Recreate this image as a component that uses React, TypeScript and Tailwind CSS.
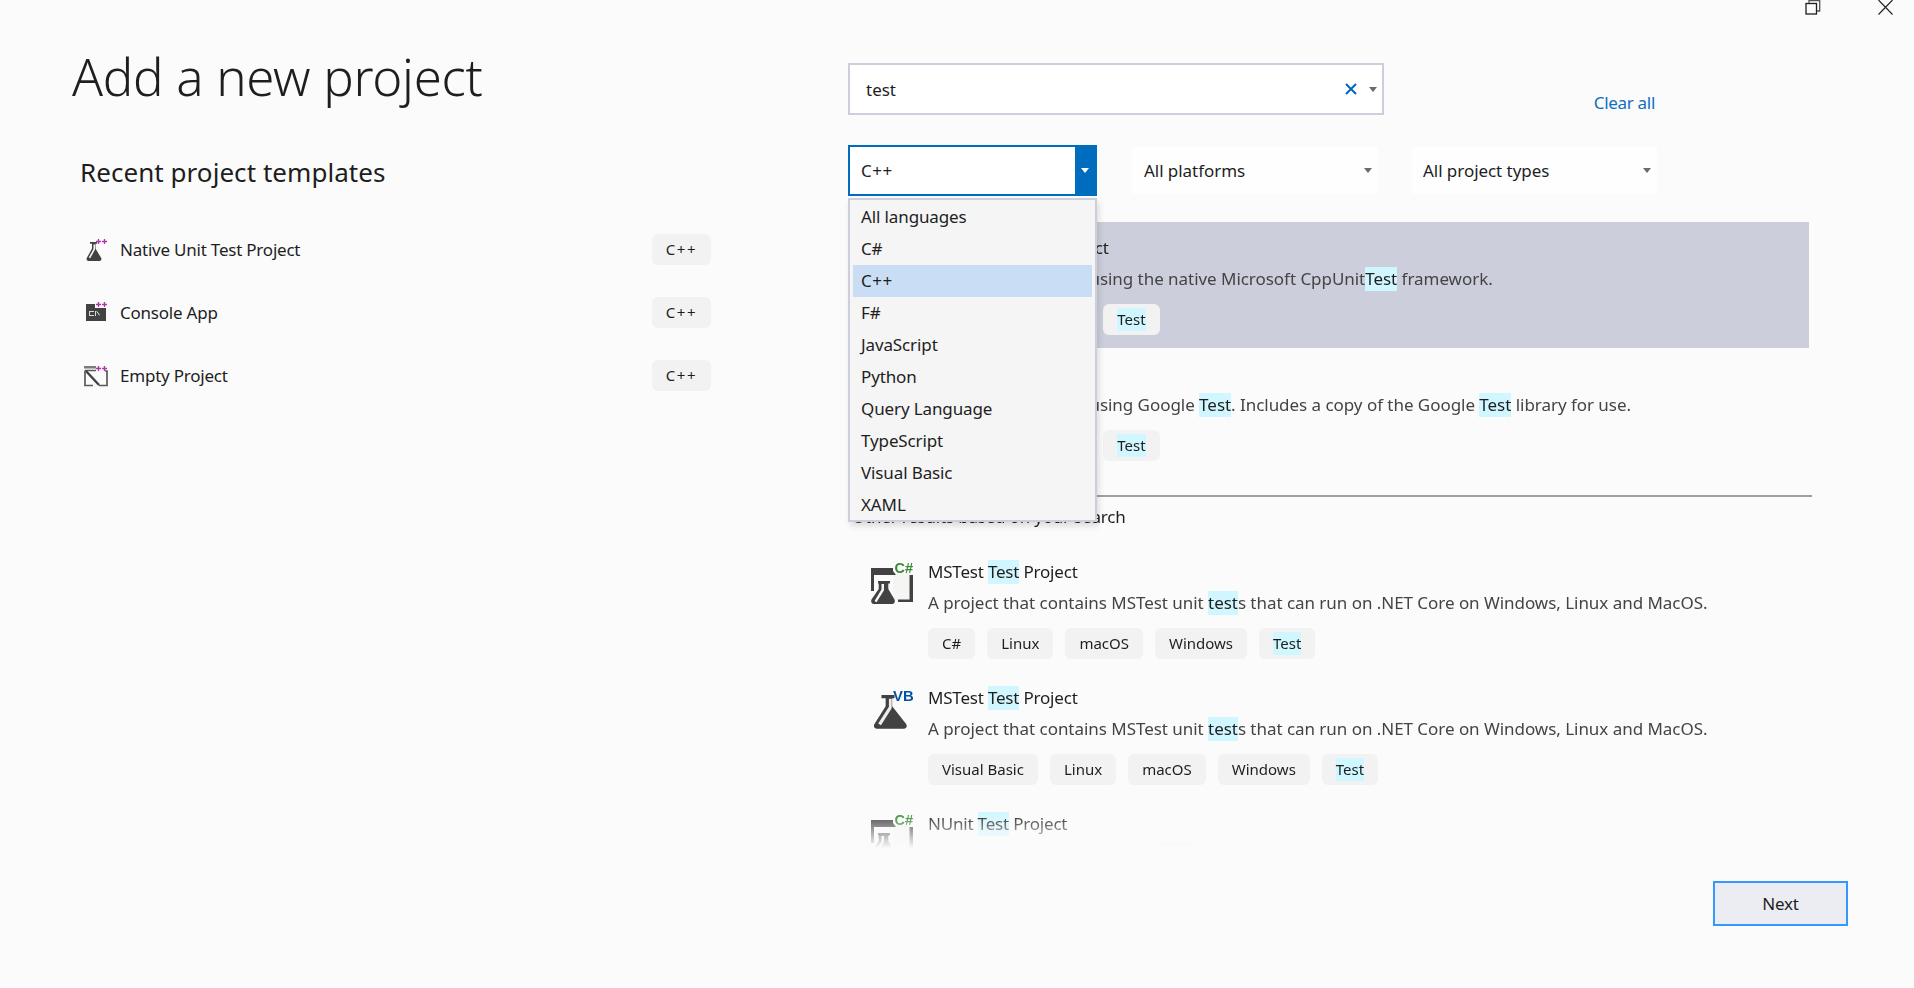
import { ReactNode } from "react";

const font = "font-['Noto_Sans',sans-serif]";

function Hl({ children }: { children: ReactNode }) {
  return <span className="inline-block bg-[#d0f6ff] text-[#1e1e1e]">{children}</span>;
}

function Caret({ className = "border-t-[#6b6b6b]" }: { className?: string }) {
  return (
    <span className={`block h-0 w-0 border-x-[4px] border-t-[5px] border-x-transparent ${className}`} />
  );
}

function Chip({ children }: { children: ReactNode }) {
  return (
    <span className="flex h-[31px] items-center rounded-[6px] bg-[#f2f2f2] px-[14px] text-[15px] text-[#1e1e1e]">
      {children}
    </span>
  );
}

function PlusPlus() {
  return (
    <path d="M14.500 1v5M12 3.500h5M20.500 1v5M18 3.500h5" stroke="#a838a8" strokeWidth="1.300" fill="none" />
  );
}

function FlaskCpp() {
  return (
    <svg width="24" height="24" viewBox="0 0 24 24">
      <path d="M6 4h7v1.800h-1.500v4.700l5.700 9.500c.6 1.300 0 3-1.500 3H4.300c-1.500 0-2.100-1.700-1.500-3l5.200-9.500V5.800H6z" fill="#424242" />
      <path d="M9.500 6.500v4.500L4.800 19.500l1.400.8 4.800-8.800V6.500z" fill="#fbfbfb" />
      <PlusPlus />
    </svg>
  );
}

function ConsoleCpp() {
  return (
    <svg width="24" height="24" viewBox="0 0 24 24">
      <path d="M2 3h10l2 2.500h8V20H2z" fill="#424242" />
      <path d="M5 10h5v1H6v3h4v1H5zM11 10h1v5h-1zM13 10l3 4-.8.6-3-4z" fill="#d8d8d8" />
      <rect x="11" y="0" width="13" height="7" fill="#fbfbfb" />
      <PlusPlus />
    </svg>
  );
}

function EmptyCpp() {
  return (
    <svg width="26" height="26" viewBox="0 0 26 26">
      <path d="M0 3h12v2.500H0z" fill="#7c7c7c" />
      <path d="M1 7.500h11M1 7.500v15h8M15 22.500h8V8h-2" stroke="#5a5a5a" strokeWidth="1.700" fill="none" />
      <path d="M2 8l13 14" stroke="#424242" strokeWidth="2.400" />
      <g transform="translate(0 2)">
        <PlusPlus />
      </g>
    </svg>
  );
}

function FlaskProject({ lang }: { lang: "C#" }) {
  return (
    <svg width="44" height="44" viewBox="0 0 44 44">
      <path d="M22 11h16v27H22z" fill="#f5f5f3" />
      <path d="M0 6h22v3l3 4H0z" fill="#424242" />
      <path d="M0 13h3v16H0zM38.500 13H42v27H27v-2.500h11.500z" fill="#424242" />
      <path d="M7 19h12v2.500h-1.700v5.500l6.200 10.500c.9 1.800 0 4.500-2 4.500H2.500c-2 0-2.900-2.700-2-4.500L7.700 27v-5.500H7z" fill="#424242" />
      <path d="M10.500 22v5.500L3.500 39l2 1.200 7.500-12V22z" fill="#f5f5f3" />
      <text x="23.500" y="11" fontFamily="'Liberation Sans',sans-serif" fontWeight="700" fontSize="14.500" fill="#388a34">{lang}</text>
    </svg>
  );
}

function FlaskVb() {
  return (
    <svg width="44" height="44" viewBox="0 0 44 44" className="ml-[3px]">
      <path d="M8 6h14v3.500h-2.500v8.500L34.500 37c1.500 2.500.2 5-2.500 5H3c-2.700 0-4-2.500-2.500-5L12.500 18V9.500H8z" fill="#424242" />
      <path d="M16 10v8.500L4.500 36.500l3 1.800L19 20V10z" fill="#ececec" />
      <text x="20.500" y="12" fontFamily="'Liberation Sans',sans-serif" fontWeight="700" fontSize="16" fill="#00539c">VB</text>
    </svg>
  );
}

type Row = {
  icon?: ReactNode;
  title: ReactNode;
  desc: ReactNode;
  tags: ReactNode[];
  selected?: boolean;
};

const testTag = <Hl>Test</Hl>;
const cppTag = <span className="tracking-[1.5px]">C++</span>;
const cppInline = <span className="tracking-[0.6px]">C++</span>;

const rows: Row[] = [
  {
    selected: true,
    icon: null,
    title: "Native Unit Test Project",
    desc: (
      <>
        Write {cppInline} unit tests using the native Microsoft CppUnit<Hl>Test</Hl> framework.
      </>
    ),
    tags: [cppTag, "Windows", testTag],
  },
  {
    icon: null,
    title: "Google Test",
    desc: (
      <>
        Write {cppInline} unit tests using Google <Hl>Test</Hl>. Includes a copy of the Google <Hl>Test</Hl> library for use.
      </>
    ),
    tags: [cppTag, "Windows", testTag],
  },
];

const otherDesc = (
  <>
    A project that contains MSTest unit <Hl>test</Hl>s that can run on .NET Core on Windows, Linux and MacOS.
  </>
);

const otherRows: Row[] = [
  {
    icon: <FlaskProject lang="C#" />,
    title: (
      <>
        MSTest <Hl>Test</Hl> Project
      </>
    ),
    desc: otherDesc,
    tags: ["C#", "Linux", "macOS", "Windows", testTag],
  },
  {
    icon: <FlaskVb />,
    title: (
      <>
        MSTest <Hl>Test</Hl> Project
      </>
    ),
    desc: otherDesc,
    tags: ["Visual Basic", "Linux", "macOS", "Windows", testTag],
  },
  {
    icon: <FlaskProject lang="C#" />,
    title: (
      <>
        NUnit <Hl>Test</Hl> Project
      </>
    ),
    desc: (
      <>
        A project that contains NUnit <Hl>test</Hl>s that can run on .NET Core on Windows, Linux and MacOS.
      </>
    ),
    tags: ["C#", "Linux", "macOS", "Windows", testTag],
  },
];

function TemplateRow({ row }: { row: Row }) {
  return (
    <div className={`flex h-[126px] shrink-0 pt-[14px] pl-[19px] ${row.selected ? "bg-[#cccedb]" : ""}`}>
      <div className="mr-[13px] flex w-[44px] shrink-0 items-start justify-start pt-[2px]">{row.icon}</div>
      <div className="flex flex-col">
        <div className="h-[24px] text-[17px] leading-[24px] tracking-[-0.2px] text-[#1e1e1e]">{row.title}</div>
        <div className="mt-[7px] h-[24px] text-[17px] leading-[24px] tracking-[-0.04px] whitespace-nowrap text-[#444444]">
          {row.desc}
        </div>
        <div className="mt-[13px] flex gap-[12px]">
          {row.tags.map((t, i) => (
            <Chip key={i}>{t}</Chip>
          ))}
        </div>
      </div>
    </div>
  );
}

const recent = [
  { name: "Native Unit Test Project", icon: <FlaskCpp /> },
  { name: "Console App", icon: <ConsoleCpp /> },
  { name: "Empty Project", icon: <EmptyCpp /> },
];

const languages = [
  "All languages",
  "C#",
  "C++",
  "F#",
  "JavaScript",
  "Python",
  "Query Language",
  "TypeScript",
  "Visual Basic",
  "XAML",
];

export default function App() {
  return (
    <div className={`flex h-[988px] w-[1914px] flex-col overflow-hidden bg-[#fbfbfb] ${font}`}>
      {/* window buttons, cut off at the top of the screenshot */}
      <div className="flex h-[14px] shrink-0 justify-end">
        <svg width="16" height="15" viewBox="0 0 16 15" className="mr-[57px]" fill="none" stroke="#1e1e1e" strokeWidth="1.300">
          <rect x="1" y="3.500" width="10.500" height="10.500" />
          <path d="M4 3V.7h10.700v10.300H12" stroke="#555" />
        </svg>
        <svg width="15" height="15" viewBox="0 0 15 15" className="mr-[21px]" stroke="#1e1e1e" strokeWidth="1.100">
          <path d="M.5 0L14.500 14.500M14.500 0L.5 14.500" />
        </svg>
      </div>

      <div className="flex flex-1">
        {/* left column */}
        <div className="w-[848px] shrink-0">
          <h1 className="mt-[28px] ml-[72px] text-[51px] leading-[68px] font-light tracking-[-0.3px] text-[#1e1e1e]">
            Add a new project
          </h1>
          <h2 className="mt-[44px] ml-[80px] text-[26px] leading-[36px] font-normal tracking-[0.05px] text-[#1e1e1e]">
            Recent project templates
          </h2>
          <div className="mt-[44px] mr-[137px] ml-[84px] flex flex-col gap-[32px]">
            {recent.map((r) => (
              <div key={r.name} className="flex h-[31px] items-center">
                <div className="flex w-[36px] shrink-0 items-center">{r.icon}</div>
                <span className="flex-1 text-[17px] tracking-[-0.22px] text-[#1e1e1e]">{r.name}</span>
                <Chip>{cppTag}</Chip>
              </div>
            ))}
          </div>
        </div>

        {/* right column */}
        <div className="flex min-w-0 flex-1 flex-col pt-[49px]">
          <div className="flex w-[809px] items-end justify-between">
            <div className="flex h-[52px] w-[536px] items-center border-2 border-[#cccedb] bg-white pr-[5px] pl-[16px]">
              <span className="flex-1 pt-[2px] text-[17px] text-[#1e1e1e]">test</span>
              <svg width="14" height="14" viewBox="0 0 14 14" stroke="#0067c0" strokeWidth="2" className="-mt-[1px] mr-[11px]">
                <path d="M2 2l10 10M12 2L2 12" />
              </svg>
              <Caret />
            </div>
            <span className="mr-[2px] text-[17px] leading-[24px] tracking-[-0.3px] text-[#0e6fc0]">Clear all</span>
          </div>

          <div className="mt-[30px] flex items-center">
            <div className="relative h-[51px] w-[249px] shrink-0">
              <div className="flex h-full items-stretch border-2 border-[#006cbe] bg-white">
                <span className="flex flex-1 items-center pl-[11px] text-[17px] tracking-[0.5px] text-[#1e1e1e]">C++</span>
                <span className="flex w-[20px] items-center justify-center bg-[#006cbe]">
                  <Caret className="border-t-white" />
                </span>
              </div>
              {/* open language list */}
              <div className="absolute top-[53px] left-0 z-10 flex h-[324px] w-[249px] flex-col overflow-hidden border-2 border-[#cccedb] bg-[#f5f5f5] px-[3px] pt-[1px] shadow-[2px_4px_6px_rgba(0,0,0,0.12)]">
                {languages.map((l) => (
                  <div
                    key={l}
                    className={`flex h-[32px] shrink-0 items-center pl-[8px] text-[17px] tracking-[-0.12px] text-[#1e1e1e] ${l === "C++" ? "bg-[#c9def5]" : ""}`}
                  >
                    {l === "C++" ? <span className="tracking-[0.5px]">C++</span> : l}
                  </div>
                ))}
              </div>
            </div>
            <div className="ml-[35px] flex h-[47px] w-[246px] items-center justify-between bg-[#fefefe] pr-[6px] pl-[12px] text-[17px] tracking-[-0.05px] text-[#1e1e1e]">
              All platforms
              <Caret />
            </div>
            <div className="ml-[34px] flex h-[47px] w-[245px] items-center justify-between bg-[#fefefe] pr-[6px] pl-[11px] text-[17px] tracking-[-0.05px] text-[#1e1e1e]">
              All project types
              <Caret />
            </div>
          </div>

          {/* results list, fades out at the bottom */}
          <div className="mt-[26px] flex h-[626px] w-[964px] shrink-0 flex-col overflow-hidden pl-[4px] [mask-image:linear-gradient(to_bottom,black_calc(100%-36px),transparent)]">
            <div className="mr-[3px] flex flex-col">
              {rows.map((r, i) => (
                <TemplateRow key={i} row={r} />
              ))}
            </div>
            <div className="mt-[21px] h-[2px] shrink-0 bg-[#a0a0a0]" />
            <div className="mt-[8px] h-[24px] shrink-0 text-[17px] leading-[24px] tracking-[-0.2px] text-[#1e1e1e]">
              Other results based on your search
            </div>
            <div className="mt-[17px] flex flex-col">
              {otherRows.map((r, i) => (
                <TemplateRow key={i} row={r} />
              ))}
            </div>
          </div>

          <div className="mt-[33px] flex w-[1000px] justify-end">
            <button className="flex h-[45px] w-[135px] items-center justify-center border-[2px] border-[#3399ff] bg-[#ecedf3] pt-[1px] text-[17px] tracking-[-0.25px] text-[#1e1e1e]">
              Next
            </button>
          </div>
        </div>
      </div>
    </div>
  );
}
